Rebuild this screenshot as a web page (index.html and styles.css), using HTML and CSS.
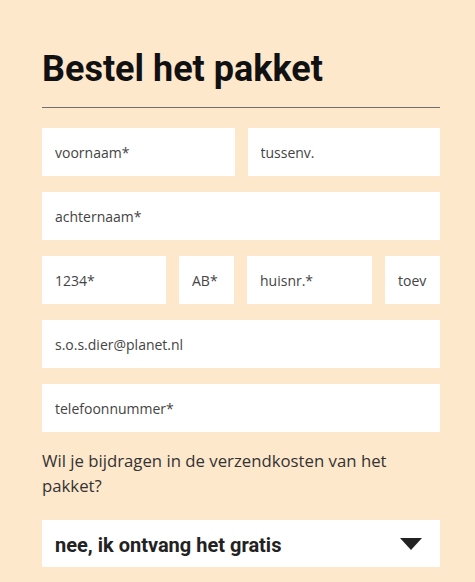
FILE: index.html
```html
<!DOCTYPE html>
<html lang="nl">
    <head>
        <meta charset="UTF-8" />
        <meta name="viewport" content="width=device-width, initial-scale=1.0" />
        <title>Bestel het pakket</title>
        <link rel="stylesheet" href="styles.css">
    </head>
    <body>
        <form class="order">
            <h2 class="order-title">Bestel het pakket</h2>

            <div class="row row-half">
                <input class="field" type="text" placeholder="voornaam*" />
                <input class="field" type="text" placeholder="tussenv." />
            </div>

            <div class="row">
                <input class="field" type="text" placeholder="achternaam*" />
            </div>

            <div class="row row-address">
                <input class="field" type="text" placeholder="1234*" />
                <input class="field" type="text" placeholder="AB*" />
                <input class="field" type="text" placeholder="huisnr.*" />
                <input class="field" type="text" placeholder="toev" />
            </div>

            <div class="row">
                <input class="field" type="email" placeholder="s.o.s.dier@planet.nl" />
            </div>

            <div class="row">
                <input class="field" type="tel" placeholder="telefoonnummer*" />
            </div>

            <p class="question">Wil je bijdragen in de verzendkosten van het pakket?</p>

            <div class="select">
                <span class="select-value">nee, ik ontvang het gratis</span>
                <svg class="select-arrow" width="22" height="12" viewBox="0 0 22 12">
                    <path d="M0 0 H22 L11 12 Z" fill="#222" />
                </svg>
            </div>
        </form>
    </body>
</html>
```

FILE: styles.css
```css
html,
body {
    margin: 0;
    background-color: #fee8cc;
}

.order {
    padding: 48px 35px 0 42px;
    font-family: "Open Sans", "Liberation Sans", sans-serif;
}

.order-title {
    margin: 0;
    padding-bottom: 17px;
    font-family: Roboto, "Liberation Sans", sans-serif;
    font-size: 36px;
    line-height: 42px;
    font-weight: bold;
    color: #111;
    border-bottom: 1px solid #6f6f6f;
}

.row {
    display: grid;
    grid-template-columns: 1fr;
    gap: 13px;
    margin-top: 16px;
}

.order-title + .row {
    margin-top: 20px;
}

.row-half {
    grid-template-columns: 1fr 1fr;
}

.row-address {
    grid-template-columns: 124fr 55fr 125fr 55fr;
}

.field {
    box-sizing: border-box;
    width: 100%;
    min-width: 0;
    height: 48px;
    padding: 0 13px;
    border: 0;
    background-color: #fff;
    font-family: "Open Sans", "Liberation Sans", sans-serif;
    font-size: 14px;
    color: #333;
}

.field::placeholder {
    color: #444;
    opacity: 1;
}

.question {
    margin: 16px 0 0;
    font-size: 16.75px;
    line-height: 25px;
    color: #333;
}

.select {
    display: flex;
    align-items: center;
    justify-content: space-between;
    height: 47px;
    margin-top: 22px;
    padding: 0 18px 0 13px;
    background-color: #fff;
}

.select-value {
    padding-top: 2px;
    font-family: Roboto, "Liberation Sans", sans-serif;
    font-size: 20px;
    font-weight: bold;
    color: #222;
}

.select-arrow {
    margin-top: 1px;
}
```
